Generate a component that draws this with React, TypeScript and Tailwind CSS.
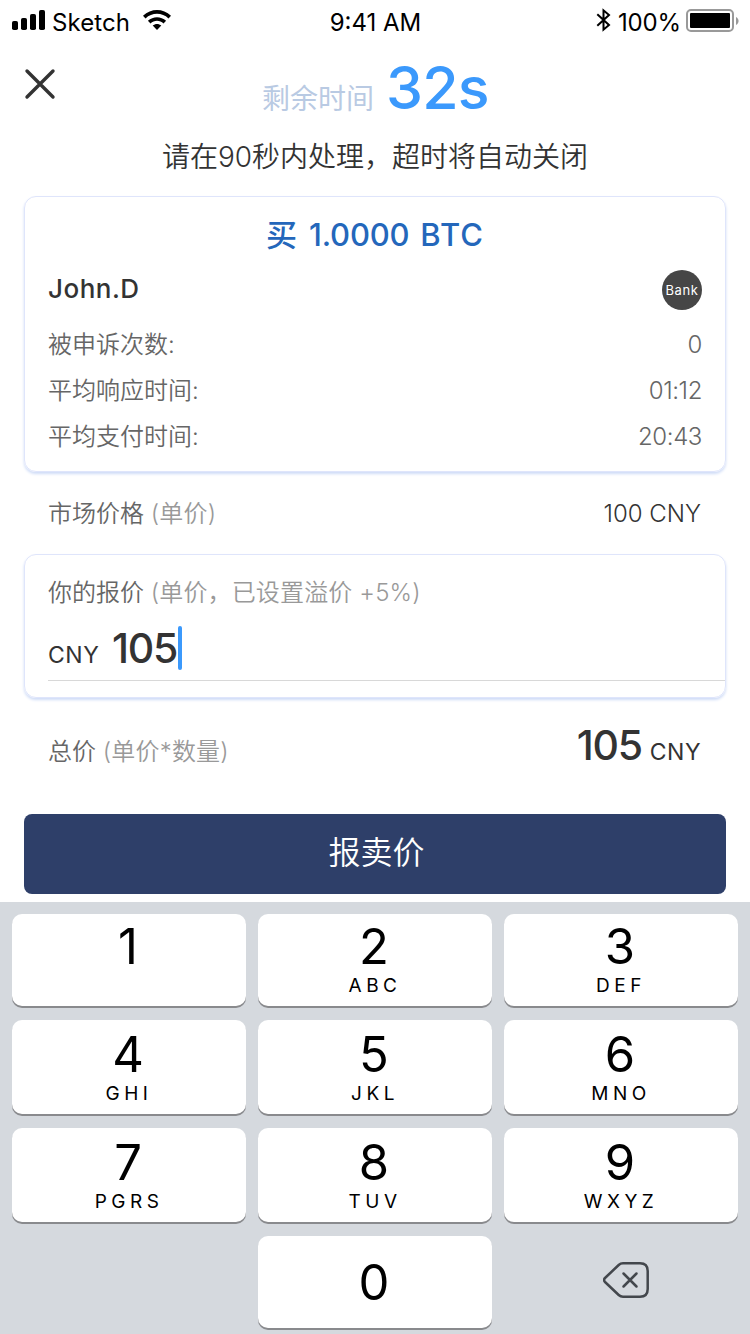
import React from "react";

const KEYS: { digit: string; letters: string }[][] = [
  [{ digit: "1", letters: "" }, { digit: "2", letters: "ABC" }, { digit: "3", letters: "DEF" }],
  [{ digit: "4", letters: "GHI" }, { digit: "5", letters: "JKL" }, { digit: "6", letters: "MNO" }],
  [{ digit: "7", letters: "PGRS" }, { digit: "8", letters: "TUV" }, { digit: "9", letters: "WXYZ" }],
];

function StatusBar() {
  return (
    <div className="flex h-10 items-start text-2xl leading-[46px] text-black">
      <div className="flex flex-1 items-start pl-3">
        <svg className="mt-[10px] h-5 w-[33px]" viewBox="0 0 33 20">
          <rect x="0" y="11" width="6" height="9" rx="1.8" />
          <rect x="9" y="8" width="6" height="12" rx="1.8" />
          <rect x="18" y="4" width="6" height="16" rx="1.8" />
          <rect x="27" y="0" width="6" height="20" rx="1.8" />
        </svg>
        <span className="ml-[7px] w-[84px] tracking-[0.1px]">Sketch</span>
        <svg className="ml-[7px] mt-[10px] h-5 w-7" viewBox="0 0 28 20">
          <path d="M0 5.8C8-1.9 20-1.9 28 5.8l-2.5 2.6C19 2.3 9 2.3 2.500 8.400Z" />
          <path d="M4.900 10.800c5.200-4.900 13-4.900 18.200 0l-2.600 2.600c-3.700-3.400-9.300-3.400-13 0Z" />
          <path d="M9.700 15.600c2.500-2.300 6.100-2.300 8.600 0L14 20Z" />
        </svg>
      </div>
      <span>9:41 AM</span>
      <div className="flex flex-1 items-start justify-end pr-[11px]">
        <svg className="mt-2 h-6 w-[15px]" viewBox="0 0 15 24" fill="none" stroke="black" strokeWidth="2">
          <path d="M1.300 6.200 13 17 7.500 21.700V2.300L13 7 1.300 17.800" />
        </svg>
        <span className="ml-[7px] w-[61px] tracking-[-0.2px]">100%</span>
        <svg className="ml-[7px] mt-[9px] h-6 w-[53px]" viewBox="0 0 53 24">
          <rect x="1" y="1" width="46" height="21" rx="4" fill="none" stroke="#999" strokeWidth="2" />
          <rect x="4" y="4" width="40" height="15" rx="1" />
          <path d="M50 8c3.400 1.500 3.400 6.500 0 8Z" fill="#999" />
        </svg>
      </div>
    </div>
  );
}

function StatRow({ label, value }: { label: string; value: string }) {
  return (
    <div className="flex h-[46px] items-center justify-between text-2xl leading-[46px] text-[#666] font-[350]">
      <span>{label}</span>
      <span className="tracking-[-0.4px]">{value}</span>
    </div>
  );
}

function Key({ digit, letters }: { digit: string; letters: string }) {
  return (
    <button className="flex flex-1 flex-col items-center rounded-[10px] bg-white text-black shadow-[0_2px_0_#898a8d]">
      <span className="h-[58px] pr-0.5 text-[49px] leading-[60px]">{digit}</span>
      <span className="h-[24px] text-[19px] leading-[22px] tracking-[4.5px]">{letters}</span>
    </button>
  );
}

export default function App() {
  return (
    <main className="flex h-[1334px] w-[750px] flex-col bg-white text-[#333] whitespace-nowrap font-['Inter','Noto_Sans_CJK_SC',sans-serif]">
      <StatusBar />

      <header className="grid h-[90px] grid-cols-[262px_1fr]">
        <svg className="ml-6 mt-7 h-8 w-8" viewBox="0 0 32 32" fill="none" stroke="#333" strokeWidth="3.4" strokeLinecap="round">
          <path d="M3 3 29 29M29 3 3 29" />
        </svg>
        <h1 className="flex items-baseline leading-[95px]">
          <span className="w-[124px] text-[28px] text-[#b9cae3]">剩余时间</span>
          <span className="text-[59px] font-medium tracking-[-0.8px] text-[#3b99fc]">32s</span>
        </h1>
      </header>

      <p className="h-[66px] text-center text-[28px] leading-[54px] font-[350]">请在90秒内处理，超时将自动关闭</p>

      <section className="mx-6 flex h-[276px] flex-col rounded-xl border border-[#dfe5fb] px-[23px] shadow-[0_2px_3px_#cfdcf7]">
        <h2 className="flex h-[67px] items-baseline justify-center text-[31px] leading-[76px] font-medium text-[#2467bb]">
          <span className="text-[31px]">买</span>
          <span className="ml-3 tracking-[-0.2px]">1.0000</span>
          <span className="ml-[11px] tracking-[1px]">BTC</span>
        </h2>
        <div className="flex h-[58px] items-start justify-between text-[26px] font-medium">
          <span className="leading-[49px] tracking-[0.5px]">John.D</span>
          <span className="mt-[6px] flex size-10 items-center justify-center rounded-full bg-[#464646] pt-0.5 text-[13px] font-normal tracking-[0.6px] text-white">Bank</span>
        </div>
        <StatRow label="被申诉次数:" value="0" />
        <StatRow label="平均响应时间:" value="01:12" />
        <StatRow label="平均支付时间:" value="20:43" />
      </section>

      <div className="ml-12 mr-[49px] flex h-[82px] justify-between text-2xl leading-[84px] font-[350]">
        <span className="text-[#666]">市场价格 <span className="tracking-[0.2px] text-[#999]">(单价)</span></span>
        <span>100 CNY</span>
      </div>

      <section className="mx-6 h-36 rounded-xl border border-[#dfe5fb] pl-[23px] shadow-[0_2px_3px_#cfdcf7]">
        <div className="h-[71px] text-2xl leading-[75px] font-[350] text-[#666]">
          你的报价 <span className="tracking-[0.15px] text-[#999]">(单价，已设置溢价 +5%)</span>
        </div>
        <div className="flex h-[55px] border-b border-[#d8d8d8]">
          <div className="flex items-baseline leading-[44px]">
            <span className="w-[64px] text-[23px] tracking-[0.5px]">CNY</span>
            <span className="w-[66px] text-[41px] font-medium tracking-[-1.2px]">105</span>
          </div>
          <span className="h-11 w-1 rounded-sm bg-[#3b99fc]" />
        </div>
      </section>

      <div className="ml-12 mr-[49px] flex h-[116px] items-baseline justify-between text-2xl leading-[95px]">
        <span className="font-[350] text-[#666]">总价 <span className="tracking-[0.2px] text-[#999]">(单价*数量)</span></span>
        <span className="flex items-baseline">
          <span className="w-[73px] text-[41px] font-medium tracking-[-1.2px]">105</span>
          <span className="text-[23px] tracking-[0.5px]">CNY</span>
        </span>
      </div>

      <button className="mx-6 h-20 rounded-lg bg-[#2e3f69] pb-0.5 pl-[3px] text-[32px] leading-[76px] font-[350] text-white">报卖价</button>

      <section className="mt-2 flex h-[432px] flex-col bg-[#d5d9de] px-3 pt-3">
        {KEYS.map((row, i) => (
          <div key={i} className={i === 0 ? "mb-[14px] flex h-[92px] gap-3 *:pt-[3px]" : "mb-[14px] flex h-[94px] gap-3 *:pt-[5px]"}>
            {row.map((k) => <Key key={k.digit} {...k} />)}
          </div>
        ))}
        <div className="grid h-[92px] grid-cols-3 gap-3">
          <span />
          <button className="rounded-[10px] bg-white pr-0.5 pt-0.5 text-[49px] leading-[90px] text-black shadow-[0_2px_0_#898a8d]">0</button>
          <button className="flex items-center justify-center pb-1 pl-[10px]" aria-label="delete">
            <svg className="h-9 w-[46px]" viewBox="0 0 46 36" fill="none" stroke="#43474c" strokeWidth="2.5" strokeLinecap="round" strokeLinejoin="round">
              <path d="M20 1.300H37q7.700 0 7.700 7.700V27q0 7.700-7.700 7.700H20q-2.500 0-4.300-1.700L2 20q-2-2 0-4L15.700 3Q17.500 1.300 20 1.300Z" />
              <path d="M20.500 11.500 33.500 24.500M33.500 11.500 20.500 24.500" />
            </svg>
          </button>
        </div>
      </section>
    </main>
  );
}
